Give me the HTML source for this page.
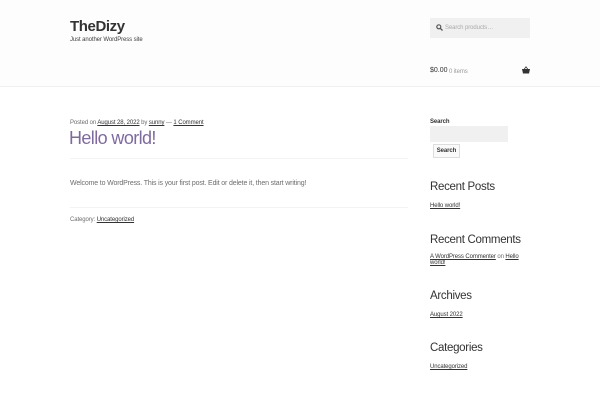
<!DOCTYPE html>
<html><head><style>
*{margin:0;padding:0;box-sizing:border-box}
body{width:600px;height:400px;background:#fff;font-family:"Liberation Sans",sans-serif;color:#6d6d6d;position:relative;overflow:hidden}
.a{position:absolute;white-space:nowrap}
.s{font-size:6px;letter-spacing:-0.1px}
u{color:#333}
h2{font-weight:300;font-size:11.5px;color:#333;letter-spacing:-0.3px}
</style></head><body>
<div class="a" style="left:0;top:0;width:600px;height:87px;background:#fdfdfd;border-bottom:1px solid #f0f0f0"></div>
<div class="a" style="left:70px;top:18px;font-size:15px;font-weight:bold;color:#333;letter-spacing:-0.4px">TheDizy</div>
<div class="a s" style="left:70px;top:37px;color:#404040">Just another WordPress site</div>
<div class="a" style="left:430px;top:18px;width:100px;height:20px;background:#f0f0f0"></div>
<svg class="a" style="left:436px;top:24px" width="7" height="7" viewBox="0 0 7 7"><circle cx="2.8" cy="2.8" r="2" fill="none" stroke="#555" stroke-width="1.2"/><path d="M4.3 4.3L6.5 6.5" stroke="#555" stroke-width="1.3"/></svg>
<div class="a s" style="left:445px;top:25px;color:#aaa">Search products…</div>
<div class="a" style="left:430px;top:67px;font-size:7px;color:#333">$0.00</div>
<div class="a s" style="left:449px;top:69px;color:#999">0 items</div>
<svg class="a" style="left:522px;top:66px" width="8" height="8" viewBox="0 0 8 8"><path d="M0 3h8l-1 4.5H1z" fill="#333"/><path d="M2 3.5L4 0.8 6 3.5" stroke="#333" fill="none" stroke-width="0.8"/></svg>
<div class="a s" style="left:70px;top:120px">Posted on <u>August 28, 2022</u> by <u>sunny</u> — <u>1 Comment</u></div>
<div class="a" style="left:69px;top:128px;font-size:18px;font-weight:300;color:#7f6aa0;letter-spacing:-0.6px">Hello world!</div>
<div class="a" style="left:70px;top:158px;width:338px;height:1px;background:#f3f3f3"></div>
<div class="a" style="left:70px;top:180px;font-size:7px;letter-spacing:-0.15px">Welcome to WordPress. This is your first post. Edit or delete it, then start writing!</div>
<div class="a" style="left:70px;top:207px;width:338px;height:1px;background:#f3f3f3"></div>
<div class="a s" style="left:70px;top:217px">Category: <u>Uncategorized</u></div>
<div class="a s" style="left:430px;top:119px;color:#333;font-weight:bold">Search</div>
<div class="a" style="left:430px;top:126px;width:78px;height:16px;background:#f0f0f0"></div>
<div class="a s" style="left:433px;top:144px;width:27px;height:14px;border:1px solid #ddd;background:#fafafa;color:#333;font-weight:bold;text-align:center;line-height:12px">Search</div>
<h2 class="a" style="left:430px;top:181px">Recent Posts</h2>
<div class="a s" style="left:430px;top:203px"><u>Hello world!</u></div>
<h2 class="a" style="left:430px;top:234px">Recent Comments</h2>
<div class="a s" style="left:430px;top:254px"><u>A WordPress Commenter</u> on <u>Hello</u></div>
<div class="a s" style="left:430px;top:260px"><u>world!</u></div>
<h2 class="a" style="left:430px;top:290px">Archives</h2>
<div class="a s" style="left:430px;top:312px"><u>August 2022</u></div>
<h2 class="a" style="left:430px;top:342px">Categories</h2>
<div class="a s" style="left:430px;top:364px"><u>Uncategorized</u></div>
</body></html>
